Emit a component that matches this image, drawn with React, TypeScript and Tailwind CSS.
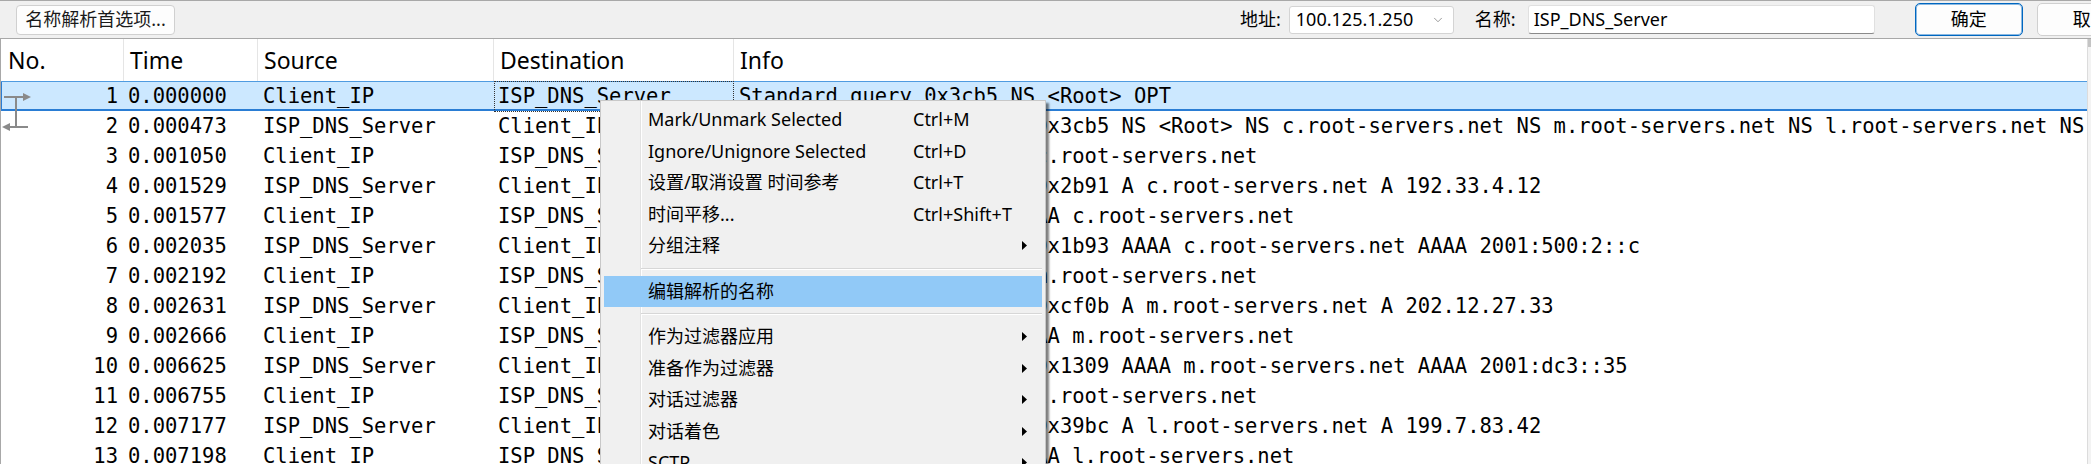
import { ChevronDown } from "lucide-react";

type Packet = {
  no: number;
  time: string;
  src: string;
  dst: string;
  info: string;
};

type MenuItem = {
  label?: string;
  shortcut?: string;
  sub?: boolean;
  sep?: boolean;
  active?: boolean;
};

const packets: Packet[] = [
  { no: 1, time: "0.000000", src: "Client_IP", dst: "ISP_DNS_Server", info: "Standard query 0x3cb5 NS <Root> OPT" },
  { no: 2, time: "0.000473", src: "ISP_DNS_Server", dst: "Client_IP", info: "Standard query response 0x3cb5 NS <Root> NS c.root-servers.net NS m.root-servers.net NS l.root-servers.net NS a.root-servers.net" },
  { no: 3, time: "0.001050", src: "Client_IP", dst: "ISP_DNS_Server", info: "Standard query 0x2b91 A c.root-servers.net" },
  { no: 4, time: "0.001529", src: "ISP_DNS_Server", dst: "Client_IP", info: "Standard query response 0x2b91 A c.root-servers.net A 192.33.4.12" },
  { no: 5, time: "0.001577", src: "Client_IP", dst: "ISP_DNS_Server", info: "Standard query 0x1b93 AAAA c.root-servers.net" },
  { no: 6, time: "0.002035", src: "ISP_DNS_Server", dst: "Client_IP", info: "Standard query response 0x1b93 AAAA c.root-servers.net AAAA 2001:500:2::c" },
  { no: 7, time: "0.002192", src: "Client_IP", dst: "ISP_DNS_Server", info: "Standard query 0xcf0b A m.root-servers.net" },
  { no: 8, time: "0.002631", src: "ISP_DNS_Server", dst: "Client_IP", info: "Standard query response 0xcf0b A m.root-servers.net A 202.12.27.33" },
  { no: 9, time: "0.002666", src: "Client_IP", dst: "ISP_DNS_Server", info: "Standard query 0x1309 AAAA m.root-servers.net" },
  { no: 10, time: "0.006625", src: "ISP_DNS_Server", dst: "Client_IP", info: "Standard query response 0x1309 AAAA m.root-servers.net AAAA 2001:dc3::35" },
  { no: 11, time: "0.006755", src: "Client_IP", dst: "ISP_DNS_Server", info: "Standard query 0x39bc A l.root-servers.net" },
  { no: 12, time: "0.007177", src: "ISP_DNS_Server", dst: "Client_IP", info: "Standard query response 0x39bc A l.root-servers.net A 199.7.83.42" },
  { no: 13, time: "0.007198", src: "Client_IP", dst: "ISP_DNS_Server", info: "Standard query 0x5d0e AAAA l.root-servers.net" },
];

const menu: MenuItem[] = [
  { label: "Mark/Unmark Selected", shortcut: "Ctrl+M" },
  { label: "Ignore/Unignore Selected", shortcut: "Ctrl+D" },
  { label: "设置/取消设置 时间参考", shortcut: "Ctrl+T" },
  { label: "时间平移...", shortcut: "Ctrl+Shift+T" },
  { label: "分组注释", sub: true },
  { sep: true },
  { label: "编辑解析的名称", active: true },
  { sep: true },
  { label: "作为过滤器应用", sub: true },
  { label: "准备作为过滤器", sub: true },
  { label: "对话过滤器", sub: true },
  { label: "对话着色", sub: true },
  { label: "SCTP", sub: true },
  { label: "追踪流", sub: true },
];

const cols = "grid grid-cols-[123px_134px_236px_240px_minmax(0,1fr)]";

// related-packet markers drawn in the No. column
const ConvMarker = ({ first }: { first: boolean }) => (
  <svg className="absolute left-0 top-0" width="32" height="30" viewBox="0 0 32 30">
    {first ? (
      <>
        <line x1="3" y1="16" x2="24" y2="16" stroke="#8a8a8a" strokeWidth="2" />
        <polygon points="22,12 30,16 22,20" fill="#8a8a8a" />
        <line x1="15" y1="16" x2="15" y2="30" stroke="#8a8a8a" strokeWidth="2" />
      </>
    ) : (
      <>
        <line x1="15" y1="0" x2="15" y2="16" stroke="#8a8a8a" strokeWidth="2" />
        <line x1="7" y1="16" x2="27" y2="16" stroke="#8a8a8a" strokeWidth="2" />
        <polygon points="9,12 1,16 9,20" fill="#8a8a8a" />
      </>
    )}
  </svg>
);

const ContextMenu = () => (
  <div className="absolute left-[600px] top-[100px] w-[446px] bg-[#f0f0f0] border border-[#c8c8c8] shadow-[3px_3px_2px_rgba(0,0,0,0.5)] pt-[3px] pl-[3px] pr-[3px] font-['Noto_Sans','Noto_Sans_CJK_SC',sans-serif] text-[18px] text-black">
    <div className="absolute left-[39px] top-0 bottom-0 w-[2px] border-l border-[#e2e2e2] border-r border-r-white" />
    {menu.map((m, i) =>
      m.sep ? (
        <div key={i} className="relative h-[14px] flex flex-col justify-center pl-[37px]">
          <div className="h-px bg-[#d7d7d7]" />
          <div className="h-px bg-white" />
        </div>
      ) : (
        <div
          key={i}
          className={`relative h-[31.5px] flex items-center pl-[44px] pr-[15px] whitespace-nowrap ${
            m.active ? "bg-[#91c9f7]" : ""
          }`}
        >
          <span className="w-[265px]">{m.label}</span>
          <span className="flex-1">{m.shortcut}</span>
          {m.sub && (
            <svg width="5" height="9" viewBox="0 0 5 9">
              <polygon points="0,0 5,4.5 0,9" fill="#000" />
            </svg>
          )}
        </div>
      )
    )}
  </div>
);

export default function App() {
  return (
    <div className="relative w-[2091px] h-[464px] overflow-hidden bg-white font-['Noto_Sans','Noto_Sans_CJK_SC',sans-serif] text-black">
      {/* toolbar */}
      <div className="h-[39px] flex items-center overflow-hidden whitespace-nowrap bg-[#f0f0f0] border-t border-b border-[#a8a8a8] text-[18px]">
        <button className="ml-[16px] shrink-0 h-[30px] w-[159px] bg-[#fdfdfd] border border-[#d0d0d0] rounded-[4px] text-[#1a1a1a] flex items-center justify-center">
          名称解析首选项...
        </button>
        <span className="ml-[1065px] shrink-0">地址:</span>
        <div className="ml-[8px] shrink-0 h-[28px] w-[165px] bg-white border border-[#d4d4d4] rounded-[3px] flex items-center pl-[6px] pr-[8px]">
          <span className="flex-1">100.125.1.250</span>
          <ChevronDown size={14} strokeWidth={1.2} className="text-[#707070]" />
        </div>
        <span className="ml-[21px] shrink-0">名称:</span>
        <div className="ml-[12px] shrink-0 h-[29px] w-[347px] bg-white border border-[#e0e0e0] border-b-[#8a8a8a] rounded-[3px] flex items-center pl-[5px]">
          ISP_DNS_Server
        </div>
        <button className="ml-[40px] shrink-0 h-[33px] w-[108px] bg-[#fdfdfd] border border-[#0067c0] shadow-[inset_0_0_0_1px_rgba(0,103,192,0.45)] rounded-[5px] flex items-center justify-center">
          确定
        </button>
        <button className="ml-[14px] shrink-0 h-[33px] w-[108px] bg-[#fdfdfd] border border-[#d0d0d0] rounded-[5px] flex items-center justify-center">
          取消
        </button>
      </div>

      {/* packet list */}
      <div className="flex">
        <div className="flex-1 min-w-0 overflow-hidden border-l border-[#a8a8a8]">
          <div className={`${cols} h-[42px] text-[23px]`}>
            <div className="flex items-center pl-[7px] border-r border-[#e5e5e5]">No.</div>
            <div className="flex items-center pl-[6px] border-r border-[#e5e5e5]">Time</div>
            <div className="flex items-center pl-[6px] border-r border-[#e5e5e5]">Source</div>
            <div className="flex items-center pl-[6px] border-r border-[#e5e5e5]">Destination</div>
            <div className="flex items-center pl-[6px]">Info</div>
          </div>
          <div className="font-['DejaVu_Sans_Mono',monospace] text-[20.5px]">
            {packets.map((p) => {
              const sel = p.no === 1;
              return (
                <div
                  key={p.no}
                  className={`${cols} h-[30px] items-center whitespace-nowrap ${
                    sel
                      ? "bg-[#cce8ff] shadow-[inset_0_1px_0_#4f9be0,inset_0_-2px_0_#2a7dd4,inset_1px_0_0_#2a7dd4]"
                      : ""
                  }`}
                >
                  <div className="relative h-full flex items-center justify-end pr-[6px]">
                    {p.no <= 2 && <ConvMarker first={p.no === 1} />}
                    {p.no}
                  </div>
                  <div className="pl-[4px] overflow-hidden">{p.time}</div>
                  <div className="pl-[5px] overflow-hidden">{p.src}</div>
                  <div
                    className={`h-full flex items-center overflow-hidden ${
                      sel ? "pl-[3px] border border-dotted border-[#333]" : "pl-[4px]"
                    }`}
                  >
                    {p.dst}
                  </div>
                  <div className="pl-[5px] overflow-hidden">{p.info}</div>
                </div>
              );
            })}
          </div>
        </div>
        <div className="w-[4px] h-[425px] bg-[#f3f3f3] border-l border-[#dcdcdc]">
          <div className="h-[8px] bg-[#c4c4c4]" />
        </div>
      </div>

      <ContextMenu />
    </div>
  );
}
